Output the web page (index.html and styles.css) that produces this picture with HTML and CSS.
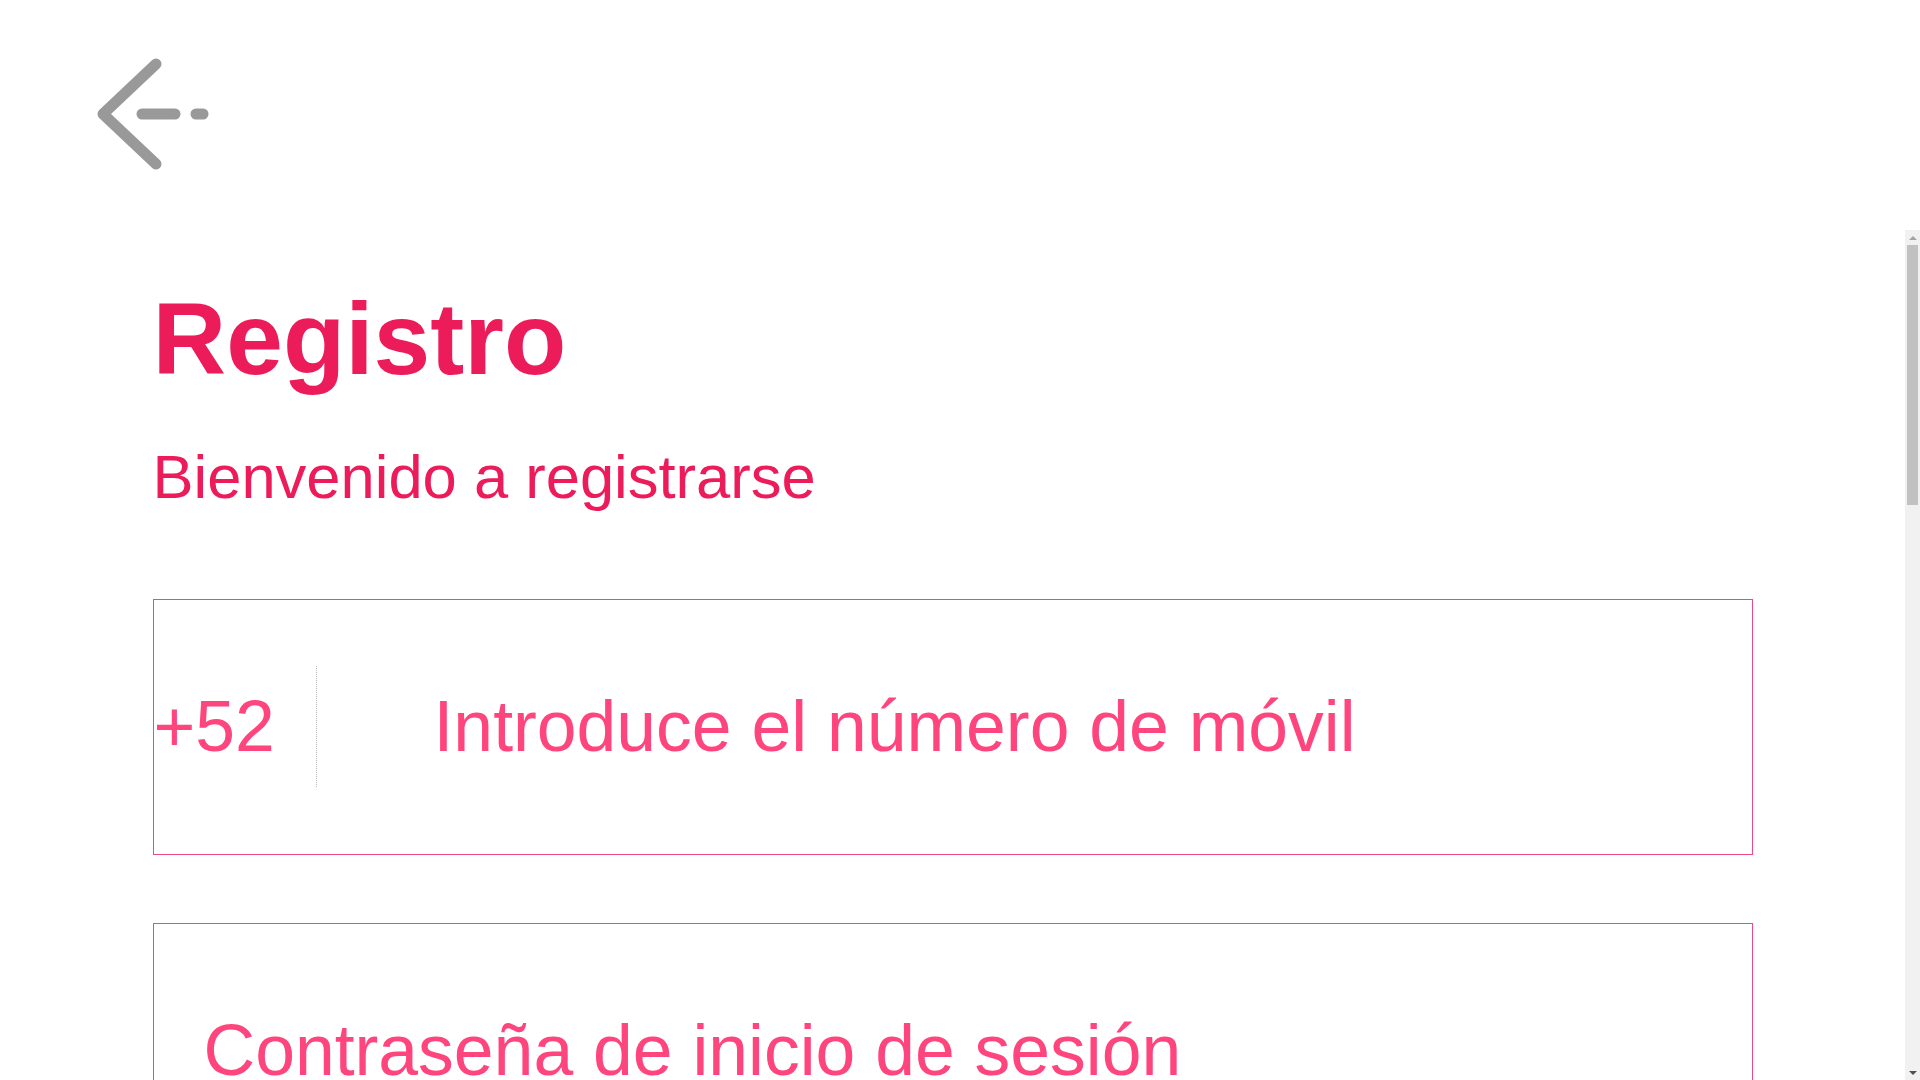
FILE: index.html
```html
<!DOCTYPE html>
<html lang="es">
<head>
<meta charset="utf-8">
<title>Registro</title>
<link rel="stylesheet" href="styles.css">
</head>
<body>
<div class="app">
  <header class="topbar">
    <button class="back" type="button" aria-label="Volver">
      <svg class="back-icon" viewBox="0 0 130 120" width="130" height="120">
        <polyline points="66,9 13,59 66,109" fill="none" stroke="#999999" stroke-width="11" stroke-linecap="round" stroke-linejoin="round"/>
        <line x1="52" y1="59" x2="85" y2="59" stroke="#999999" stroke-width="11" stroke-linecap="round"/>
        <line x1="106" y1="59" x2="113" y2="59" stroke="#999999" stroke-width="11" stroke-linecap="round"/>
      </svg>
    </button>
  </header>
  <div class="body-row">
    <main class="scroller">
      <div class="content">
        <h1 class="title">Registro</h1>
        <p class="subtitle">Bienvenido a registrarse</p>
        <div class="field field-phone">
          <span class="code">+52</span>
          <span class="divider"></span>
          <input class="input input-phone" type="tel" placeholder="Introduce el número de móvil">
        </div>
        <div class="field field-pass">
          <input class="input" type="password" placeholder="Contraseña de inicio de sesión">
        </div>
      </div>
    </main>
    <div class="scrollbar" aria-hidden="true">
      <div class="sb-btn sb-up"><span class="sb-arrow-up"></span></div>
      <div class="sb-track"><div class="sb-thumb"></div></div>
      <div class="sb-btn sb-down"><span class="sb-arrow-down"></span></div>
    </div>
  </div>
</div>
</body>
</html>
```

FILE: styles.css
```css
* {
  box-sizing: border-box;
}

html, body {
  margin: 0;
  padding: 0;
  height: 100%;
  background: #ffffff;
  font-family: "Liberation Sans", Arial, sans-serif;
}

.app {
  height: 100vh;
  display: flex;
  flex-direction: column;
  overflow: hidden;
}

.topbar {
  flex: 0 0 230px;
  height: 230px;
  padding: 55px 0 0 90px;
}

.back {
  display: block;
  padding: 0;
  margin: 0;
  border: 0;
  background: transparent;
  cursor: pointer;
}

.back-icon {
  display: block;
}

.body-row {
  flex: 1 1 auto;
  min-height: 0;
  display: flex;
}

.scroller {
  flex: 1 1 auto;
  min-width: 0;
  overflow-y: auto;
  scrollbar-width: none;
}

.scroller::-webkit-scrollbar {
  display: none;
}

.scrollbar {
  flex: 0 0 15px;
  width: 15px;
  display: flex;
  flex-direction: column;
  background: #f1f1f1;
}

.sb-btn {
  flex: 0 0 15px;
  height: 15px;
  display: flex;
  align-items: center;
  justify-content: center;
}

.sb-arrow-up {
  width: 0;
  height: 0;
  border-left: 4px solid transparent;
  border-right: 4px solid transparent;
  border-bottom: 4px solid #a3a3a3;
}

.sb-arrow-down {
  width: 0;
  height: 0;
  border-left: 4px solid transparent;
  border-right: 4px solid transparent;
  border-top: 4px solid #505050;
}

.sb-track {
  flex: 1 1 auto;
  padding: 0 2px;
}

.sb-thumb {
  height: 260px;
  background: #c1c1c1;
}

.content {
  width: 1600px;
  margin: 0 auto;
  padding: 58px 0 1737px;
}

.title {
  margin: 0;
  font-size: 102px;
  line-height: 1;
  font-weight: 700;
  color: #ec1c5a;
}

.subtitle {
  margin: 56px 0 0;
  font-size: 61.5px;
  line-height: 1;
  font-weight: 400;
  color: #ec1c5a;
}

.field {
  display: flex;
  align-items: center;
  height: 256px;
  border: 1px solid #ef4a80;
}

.field-phone {
  margin-top: 91px;
}

.field-pass {
  margin-top: 68px;
  padding-left: 50px;
}

.code {
  flex: 0 0 162px;
  font-size: 71.5px;
  line-height: 1;
  color: #ff457d;
}

.divider {
  flex: 0 0 auto;
  width: 0;
  height: 121px;
  border-left: 1px dotted #b8b8b8;
}

.input {
  flex: 1 1 auto;
  min-width: 0;
  border: 0;
  outline: none;
  padding: 0;
  margin: 0;
  background: transparent;
  font-family: "Liberation Sans", Arial, sans-serif;
  font-size: 71.5px;
  line-height: 1.2;
  color: #ff457d;
}

.input::placeholder {
  color: #ff457d;
  opacity: 1;
}

.input-phone {
  margin-left: 117px;
}
```
